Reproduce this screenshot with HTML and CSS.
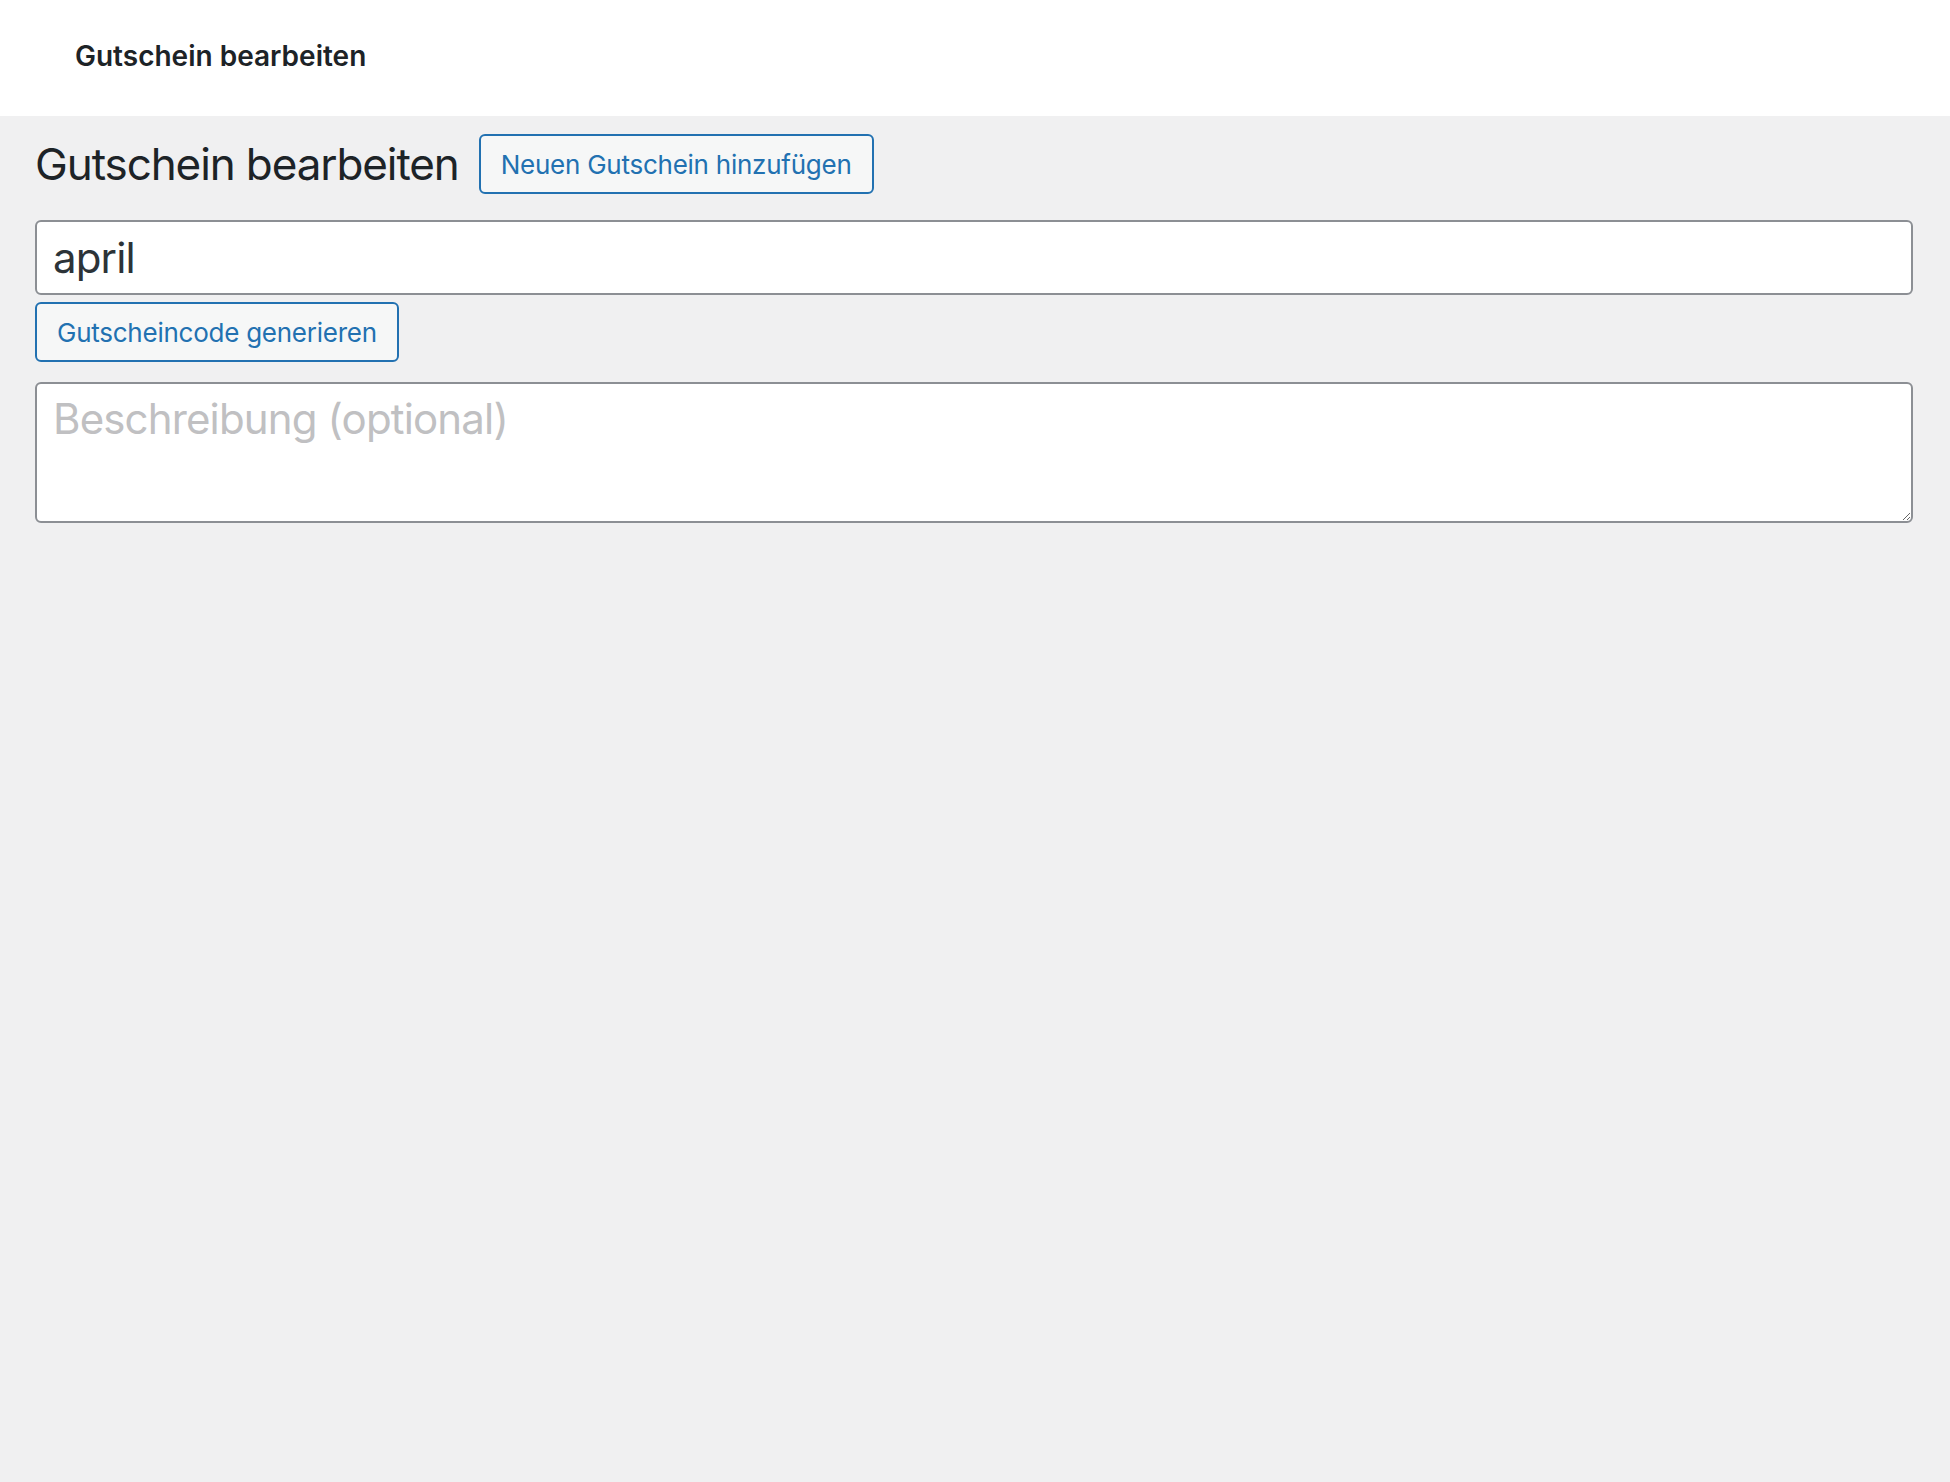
FILE: index.html
```html
<!DOCTYPE html>
<html lang="de">
<head>
    <meta charset="UTF-8">
    <meta name="viewport" content="width=device-width, initial-scale=1.0">
    <title>Gutschein bearbeiten</title>
    <link rel="stylesheet" href="styles.css">
</head>
<body>
    <header class="admin-header">
        <h2 class="admin-header-title">Gutschein bearbeiten</h2>
    </header>

    <div class="wrap">
        <div class="page-head">
            <h1 class="page-title">Gutschein bearbeiten</h1>
            <a href="#" class="btn-secondary">Neuen Gutschein hinzufügen</a>
        </div>

        <form class="coupon-form" onsubmit="event.preventDefault();">
            <input type="text" id="title" class="title-input" value="april">
            <div class="code-actions">
                <button type="button" class="btn-secondary">Gutscheincode generieren</button>
            </div>
            <textarea id="excerpt" class="desc-input" placeholder="Beschreibung (optional)"></textarea>
        </form>
    </div>
</body>
</html>
```

FILE: styles.css
```css
html, body {
    height: 100%;
}
body {
    margin: 0;
    background-color: #f0f0f1;
    color: #1d2327;
    font-family: Inter, "Liberation Sans", Arial, sans-serif;
}
.admin-header {
    height: 116px;
    box-sizing: border-box;
    background-color: #fff;
    display: flex;
    align-items: center;
    padding: 0 0 4px 75px;
}
.admin-header-title {
    margin: 0;
    font-size: 28px;
    font-weight: 600;
    color: #1d2327;
}
.wrap {
    padding: 18px 37px 0 35px;
}
.page-head {
    display: flex;
    align-items: center;
    gap: 20px;
}
.page-title {
    margin: 0;
    font-size: 44px;
    font-weight: 400;
    letter-spacing: -1.1px;
    color: #1d2327;
}
.btn-secondary {
    display: inline-flex;
    align-items: center;
    height: 60px;
    box-sizing: border-box;
    padding: 0 20px;
    font-family: inherit;
    font-size: 26px;
    letter-spacing: -0.25px;
    color: #2271b1;
    text-decoration: none;
    background-color: #f6f7f7;
    border: 2px solid #2271b1;
    border-radius: 6px;
    cursor: pointer;
}
.coupon-form {
    display: flex;
    flex-direction: column;
    margin-top: 26px;
}
.title-input, .desc-input {
    box-sizing: border-box;
    width: 100%;
    margin: 0;
    font-family: inherit;
    font-size: 42px;
    letter-spacing: -0.85px;
    color: #2c3338;
    background-color: #fff;
    border: 2px solid #8c8f94;
    border-radius: 6px;
    outline: none;
}
.title-input {
    height: 75px;
    padding: 0 16px;
}
.code-actions {
    margin-top: 7px;
}
.desc-input {
    height: 141px;
    margin-top: 20px;
    padding: 10px 16px;
    line-height: 1.2;
    resize: vertical;
}
.desc-input::placeholder {
    color: #c0c0c2;
}
```
